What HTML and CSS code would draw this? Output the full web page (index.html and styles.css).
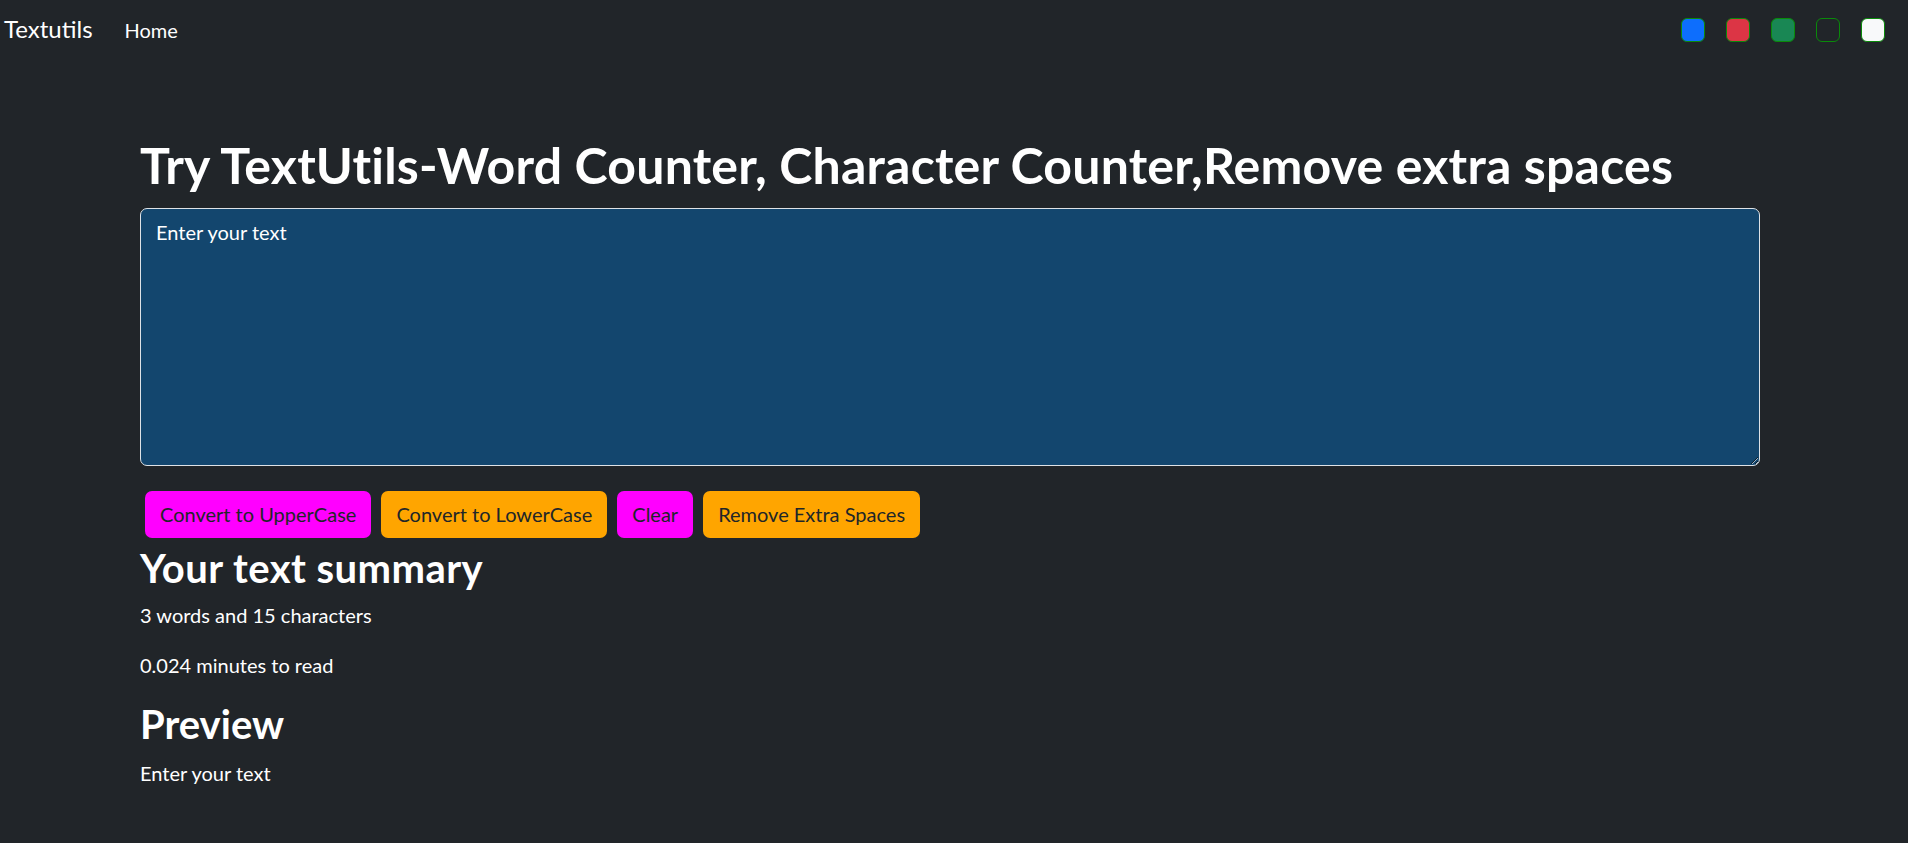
FILE: index.html
```html
<!DOCTYPE html>
<html lang="en">
<head>
<meta charset="utf-8">
<title>Textutils</title>
<link rel="stylesheet" href="styles.css">
</head>
<body>
<nav class="navbar">
  <a class="brand" href="#">Textutils</a>
  <a class="nav-link" href="#">Home</a>
  <div class="swatches">
    <span class="swatch swatch-blue"></span>
    <span class="swatch swatch-red"></span>
    <span class="swatch swatch-green"></span>
    <span class="swatch swatch-dark"></span>
    <span class="swatch swatch-light"></span>
  </div>
</nav>
<main class="container">
  <h1 class="title">Try TextUtils-Word Counter, Character Counter,Remove extra spaces</h1>
  <textarea class="text-box" rows="8">Enter your text</textarea>
  <div class="actions">
    <button class="btn btn-pink">Convert to UpperCase</button>
    <button class="btn btn-orange">Convert to LowerCase</button>
    <button class="btn btn-pink">Clear</button>
    <button class="btn btn-orange">Remove Extra Spaces</button>
  </div>
  <h2 class="section-title">Your text summary</h2>
  <p class="line">3 words and 15 characters</p>
  <p class="line">0.024 minutes to read</p>
  <h2 class="section-title section-title-preview">Preview</h2>
  <p class="line">Enter your text</p>
</main>
</body>
</html>
```
FILE: styles.css
```css
* { box-sizing: border-box; }

html, body {
  margin: 0;
  background: #212529;
  color: #ffffff;
  font-family: "Lato", "Liberation Sans", sans-serif;
  font-size: 20px;
  line-height: 30px;
}

.navbar {
  display: flex;
  align-items: flex-start;
  height: 70px;
  padding: 14px 23px 0 4px;
}

.brand {
  color: #ffffff;
  text-decoration: none;
  font-size: 24px;
  line-height: 30px;
  font-weight: 400;
}

.nav-link {
  color: #ffffff;
  text-decoration: none;
  font-size: 20px;
  line-height: 30px;
  margin-left: 32px;
  margin-top: 1px;
}

.swatches {
  display: flex;
  gap: 21px;
  margin-left: auto;
  margin-top: 4px;
}

.swatch {
  display: block;
  width: 24px;
  height: 24px;
  border: 1px solid #0a8a0a;
  border-radius: 6px;
}

.swatch-blue { background: #0d6efd; }
.swatch-red { background: #dc3545; }
.swatch-green { background: #198754; }
.swatch-dark { background: #212529; }
.swatch-light { background: #f8f9fa; }

.container {
  padding: 0 148px 0 140px;
}

.title {
  margin: 64.5px 0 13.5px;
  font-size: 50px;
  line-height: 60px;
  font-weight: 700;
  letter-spacing: 0.2px;
}

.text-box {
  display: block;
  width: 100%;
  height: 258px;
  margin: 0;
  padding: 7.5px 15px;
  background: #13466e;
  color: #ffffff;
  border: 1px solid #dee2e6;
  border-radius: 7px;
  font-family: inherit;
  font-size: 20px;
  line-height: 30px;
  outline: none;
}

.actions {
  display: flex;
  gap: 10px;
  margin: 24.5px 0 0 5px;
}

.btn {
  padding: 7.75px 14px;
  border: 1px solid transparent;
  border-radius: 7px;
  color: #212529;
  font-family: inherit;
  font-size: 20px;
  line-height: 30px;
  cursor: pointer;
}

.btn-pink { background: #ff00ff; }
.btn-orange { background: #ffa500; }

.section-title {
  margin: 5.5px 0 8.5px;
  font-size: 40px;
  line-height: 48px;
  font-weight: 700;
  letter-spacing: 0.45px;
}

.section-title-preview {
  letter-spacing: 0;
}

.line {
  margin: 0 0 20px;
}

.line + .section-title {
  margin-top: 0.5px;
  margin-bottom: 9.5px;
}
```
